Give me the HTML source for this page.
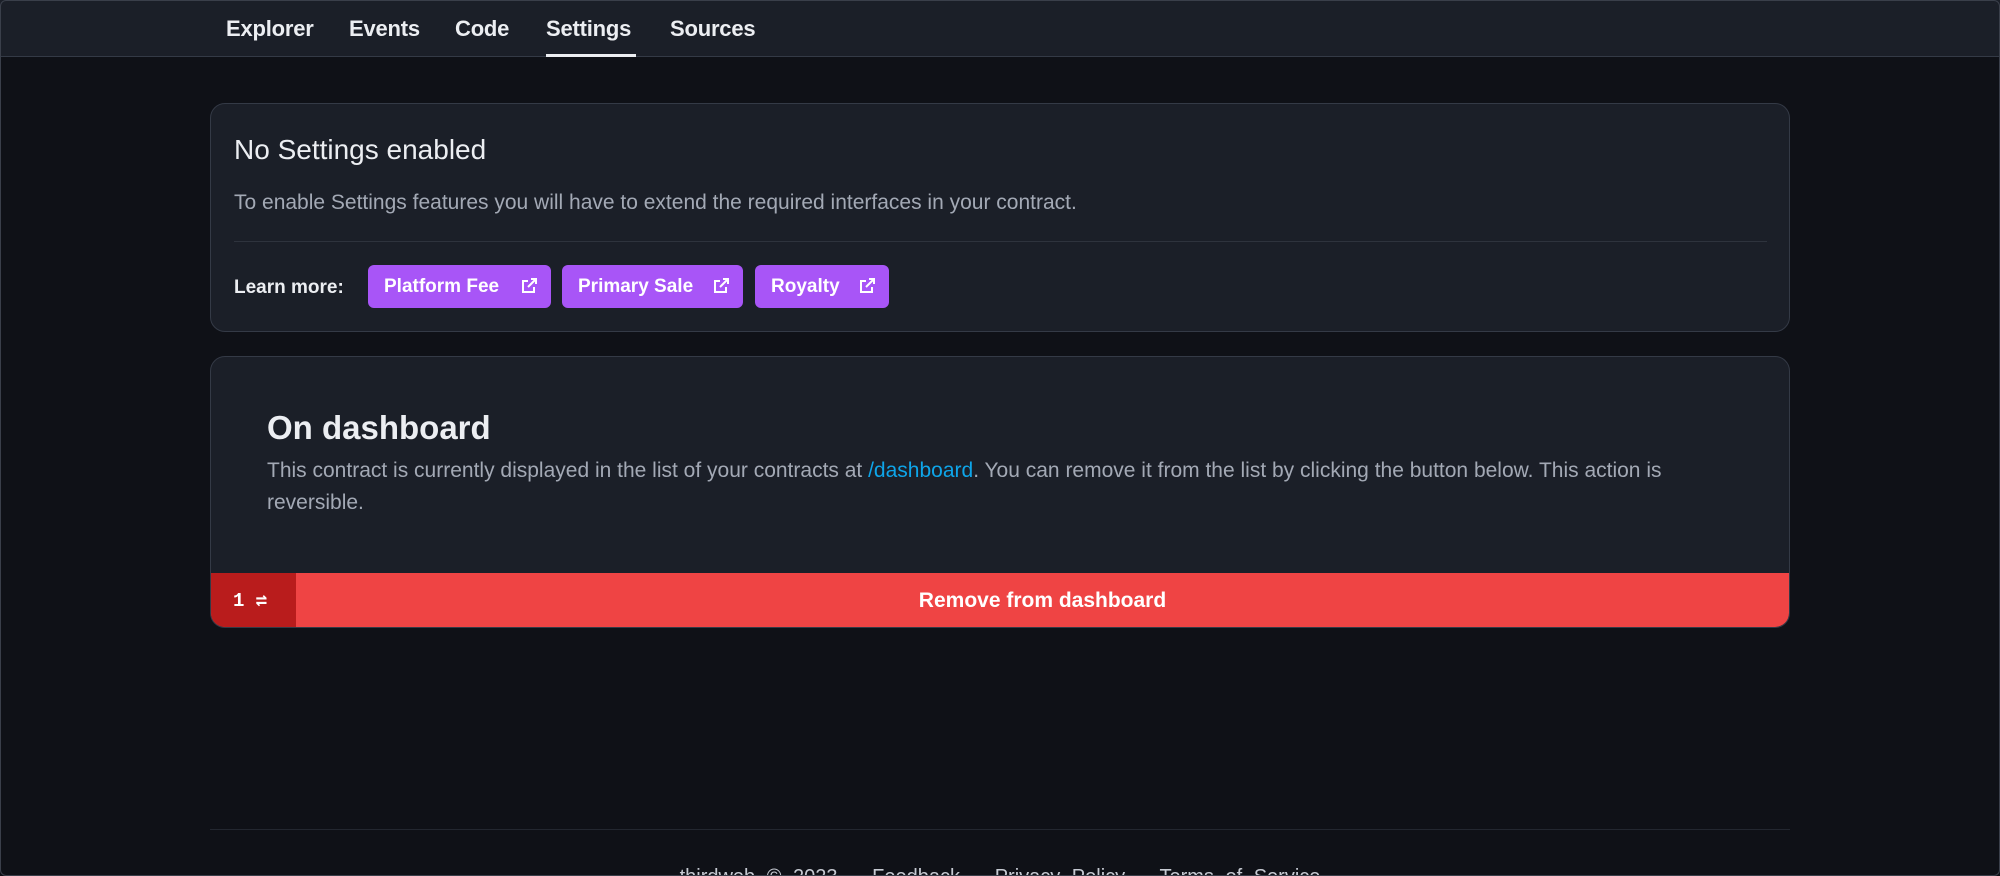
<!DOCTYPE html>
<html style="overflow:hidden"><head><meta charset="utf-8"><style>
*{box-sizing:border-box;margin:0;padding:0}
html,body{width:2000px;height:876px;overflow:hidden}
body{background:#0f1117;font-family:"Liberation Sans",sans-serif}
#w{position:relative;width:2000px;height:876px;overflow:hidden}
.frame{position:absolute;inset:0;border:1px solid #3a3f4a;border-radius:6px;pointer-events:none}
.nav{position:absolute;left:0;top:0;width:2000px;height:57px;background:#1b1f28;border-bottom:1px solid #343a46}
.nav a{position:absolute;top:16px;color:#eceef2;font-size:22px;font-weight:bold;letter-spacing:-0.2px}
.ul{position:absolute;left:546px;top:54px;width:90px;height:3px;background:#eceef2}
.card{position:absolute;left:210px;width:1580px;background:#1b1f28;border:1px solid #343a46;border-radius:15px;overflow:hidden}
.t1{position:absolute;left:23px;top:30px;color:#eceef2;font-size:28px}
.d1{position:absolute;left:23px;top:87px;color:#a3a9b5;font-size:21px}
.hr{position:absolute;left:23px;right:22px;top:137px;height:1px;background:#2e333d}
.lm{position:absolute;left:23px;top:173px;color:#eceef2;font-size:19px;font-weight:bold}
.btn{position:absolute;top:161px;height:43px;background:#a855f7;border-radius:6px;color:#fff;font-size:19px;font-weight:bold;line-height:43px;padding-left:16px}
.btn svg{position:absolute;right:14px;top:13px}
.t2{position:absolute;left:56px;top:52px;color:#eceef2;font-size:33px;font-weight:bold}
.d2{position:absolute;left:56px;top:98px;width:1440px;color:#a3a9b5;font-size:21px;line-height:32px}
.d2 a{color:#0ea5e9}
.bar{position:absolute;left:0;right:0;top:216px;height:56px;background:#ef4444}
.bar .k{position:absolute;left:0;top:0;width:85px;height:56px;background:#b91c1c;color:#fff;font-family:"Liberation Mono",monospace;font-weight:bold;font-size:19px;line-height:56px;padding-left:22px}
.bar .r{position:absolute;left:0;right:0;text-align:center;line-height:56px;color:#fff;font-size:21px;font-weight:bold;padding-left:85px}
.fl{position:absolute;left:210px;width:1580px;top:829px;height:1px;background:#232730}
.ft{position:absolute;top:866px;left:0;width:2000px;text-align:center;color:#c6cad2;font-size:20px;word-spacing:6px}
</style></head><body><div id="w">
<div class="nav">
<a style="left:226px">Explorer</a><a style="left:349px">Events</a><a style="left:455px">Code</a><a style="left:546px">Settings</a><a style="left:670px">Sources</a>
<div class="ul"></div></div>
<div class="card" style="top:103px;height:229px">
<div class="t1">No Settings enabled</div>
<div class="d1">To enable Settings features you will have to extend the required interfaces in your contract.</div>
<div class="hr"></div>
<div class="lm">Learn more:</div>
<div class="btn" style="left:157px;width:183px">Platform Fee<svg width="16" height="16" viewBox="0 0 16 16" fill="none" stroke="#fff" stroke-width="2"><path d="M13 9v5H2V3h5M10 1h5v5M15 1L7 9"/></svg></div>
<div class="btn" style="left:351px;width:181px">Primary Sale<svg width="16" height="16" viewBox="0 0 16 16" fill="none" stroke="#fff" stroke-width="2"><path d="M13 9v5H2V3h5M10 1h5v5M15 1L7 9"/></svg></div>
<div class="btn" style="left:544px;width:134px">Royalty<svg width="16" height="16" viewBox="0 0 16 16" fill="none" stroke="#fff" stroke-width="2"><path d="M13 9v5H2V3h5M10 1h5v5M15 1L7 9"/></svg></div>
</div>
<div class="card" style="top:356px;height:272px">
<div class="t2">On dashboard</div>
<div class="d2">This contract is currently displayed in the list of your contracts at <a>/dashboard</a>. You can remove it from the list by clicking the button below. This action is<br>reversible.</div>
<div class="bar"><div class="k">1 ⇌</div><div class="r">Remove from dashboard</div></div>
</div>
<div class="fl"></div>
<div class="ft">thirdweb © 2023 &nbsp; Feedback &nbsp; Privacy Policy &nbsp; Terms of Service</div>
<div class="frame"></div>
</div></body></html>
